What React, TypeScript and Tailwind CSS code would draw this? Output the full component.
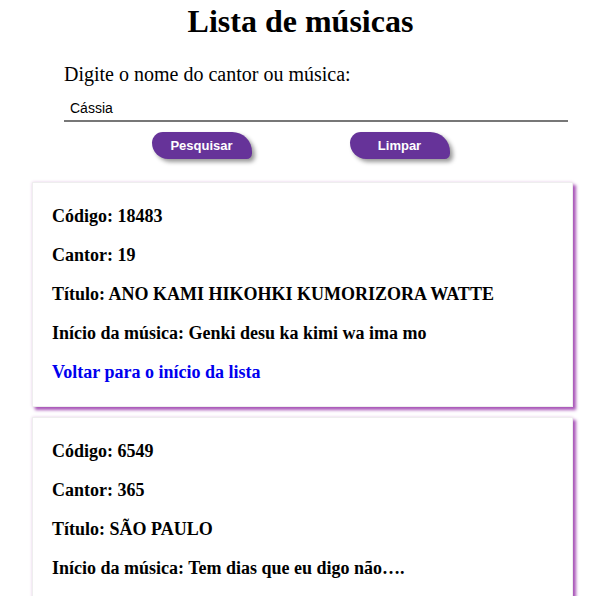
import React, { useState } from 'react';

interface Musica {
    codigo: number;
    cantor: number;
    titulo: string;
    inicio: string;
}

const musicas: Musica[] = [
    { codigo: 18483, cantor: 19, titulo: 'ANO KAMI HIKOHKI KUMORIZORA WATTE', inicio: 'Genki desu ka kimi wa ima mo' },
    { codigo: 6549, cantor: 365, titulo: 'SÃO PAULO', inicio: 'Tem dias que eu digo não….' },
];

export default function App() {
    const [busca, setBusca] = useState('Cássia');

    return (
        <div className="min-h-screen bg-white text-black font-['Liberation_Serif',serif]">
            <h1 className="text-[32px] font-bold text-center leading-[37px] pt-[3px]">Lista de músicas</h1>
            <div className="mx-[64px] mt-[23px]">
                <label className="block text-[20px] leading-[23px]">Digite o nome do cantor ou música:</label>
                <input
                    type="text"
                    value={busca}
                    onChange={(e) => setBusca(e.target.value)}
                    className="mt-[9px] w-[504px] h-[27px] px-[6px] border-b-2 border-[#777] outline-none text-[14px] font-['Liberation_Sans',sans-serif]"
                />
            </div>
            <div className="flex justify-center gap-[98px] mt-[10px]">
                <button className="w-[100px] h-[27px] bg-[#663399] text-white text-[13px] font-bold font-['Liberation_Sans',sans-serif] rounded-[12px_22px_6px_18px] shadow-[3px_3px_4px_#999]">
                    Pesquisar
                </button>
                <button
                    onClick={() => setBusca('')}
                    className="w-[100px] h-[27px] bg-[#663399] text-white text-[13px] font-bold font-['Liberation_Sans',sans-serif] rounded-[12px_22px_6px_18px] shadow-[3px_3px_4px_#999]"
                >
                    Limpar
                </button>
            </div>
            <div className="mt-[23px] ml-[32px] w-[541px] flex flex-col gap-[10px]">
                {musicas.map((m) => (
                    <div
                        key={m.codigo}
                        className="bg-white px-[19px] py-[5px] border border-[#eee] shadow-[3px_3px_3px_#a855b8,0_0_3px_#e8cfe8] text-[18px] leading-[21px] font-bold"
                    >
                        <p className="my-[18px]">Código: {m.codigo}</p>
                        <p className="my-[18px]">Cantor: {m.cantor}</p>
                        <p className="my-[18px]">Título: {m.titulo}</p>
                        <p className="my-[18px]">Início da música: {m.inicio}</p>
                        <p className="my-[18px]">
                            <a href="#" className="text-[#0000ee]">Voltar para o início da lista</a>
                        </p>
                    </div>
                ))}
            </div>
        </div>
    );
}
